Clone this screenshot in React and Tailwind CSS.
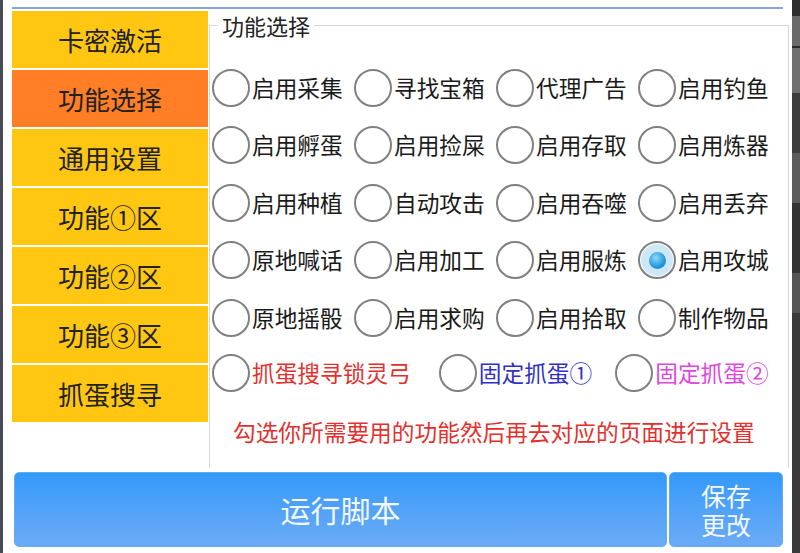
import React from "react";

const rows = [
  ["启用采集", "寻找宝箱", "代理广告", "启用钓鱼"],
  ["启用孵蛋", "启用捡屎", "启用存取", "启用炼器"],
  ["启用种植", "自动攻击", "启用吞噬", "启用丢弃"],
  ["原地喊话", "启用加工", "启用服炼", "启用攻城"],
  ["原地摇骰", "启用求购", "启用拾取", "制作物品"],
];
const tabs = ["卡密激活", "功能选择", "通用设置", "功能①区", "功能②区", "功能③区", "抓蛋搜寻"];

function Radio({ checked }) {
  return (
    <span className="w-[38px] h-[38px] shrink-0 rounded-full border-[2.5px] border-[#808080] bg-white flex items-center justify-center">
      {checked && (
        <span className="w-[32px] h-[32px] rounded-full bg-[#cde7f6] flex items-center justify-center">
          <span className="w-[17px] h-[17px] rounded-full bg-[radial-gradient(circle_at_40%_35%,#8fd8f8,#1a92d6_65%,#1478c0)]" />
        </span>
      )}
    </span>
  );
}

function Option({ label, checked, color = "text-[#1a1a1a]" }) {
  return (
    <div className="flex items-center gap-[2px]">
      <Radio checked={checked} />
      <span className={`text-[22.7px] leading-[30px] whitespace-nowrap ${color}`}>{label}</span>
    </div>
  );
}

export default function App() {
  return (
    <div className="w-[800px] h-[553px] flex bg-white overflow-hidden font-['Noto_Sans_CJK_SC','Noto_Sans',sans-serif]">
      <div className="w-[3px] shrink-0 bg-[#474b56]" />
      <div className="w-[789px] shrink-0 pt-[7px] flex flex-col">
        <div className="ml-[9px] w-[771px] h-[2px] bg-[#86a6d6]" />
        <div className="mt-[2px] flex h-[457px] pl-[9px]">
          <div className="w-[197px] shrink-0 flex flex-col gap-[2px]">
            {tabs.map((t, i) => (
              <div
                key={t}
                className={`w-[196px] h-[57px] flex items-center justify-center text-[26px] text-[#222] ${
                  i === 1 ? "bg-[#ff7e26]" : "bg-[#ffc712]"
                }`}
              >
                {t}
              </div>
            ))}
          </div>
          <fieldset className="w-[580px] min-w-0 border-l border-r border-t border-b-0 border-[#d8d8d8]">
            <legend className="ml-[8px] px-[4px] text-[22px] leading-[28px] text-[#222]">功能选择</legend>
            <div className="mt-[20px] pl-[2px] flex flex-col">
              {rows.map((r, ri) => (
                <div key={ri} className="h-[57.5px] flex items-center">
                  {r.map((label, ci) => (
                    <div key={label} className="w-[142px] shrink-0">
                      <Option label={label} checked={ri === 3 && ci === 3} />
                    </div>
                  ))}
                </div>
              ))}
              <div className="h-[52px] flex items-center">
                <Option label="抓蛋搜寻锁灵弓" color="text-[#e3302c]" />
                <div className="ml-[28px]">
                  <Option label="固定抓蛋①" color="text-[#3030c8]" />
                </div>
                <div className="ml-[23px]">
                  <Option label="固定抓蛋②" color="text-[#df45e0]" />
                </div>
              </div>
              <div className="mt-[18px] pl-[21px] text-[22.7px] leading-[30px] text-[#e3302c] whitespace-nowrap">
                勾选你所需要用的功能然后再去对应的页面进行设置
              </div>
            </div>
          </fieldset>
        </div>
        <div className="mt-[4px] flex pl-[11px] gap-[2px] h-[75px]">
          <button className="w-[653px] h-full rounded-[5px] border border-[#62adf2] bg-gradient-to-b from-[#3199f9] to-[#6babf6] text-[#f3f8ff] text-[30px] flex items-center justify-center">
            运行脚本
          </button>
          <button className="w-[114px] h-full rounded-[5px] border border-[#62adf2] bg-gradient-to-b from-[#3199f9] to-[#6babf6] text-[#f3f8ff] text-[25px] leading-[29px] flex items-center justify-center">
            <span className="block text-center">
              保存
              <br />
              更改
            </span>
          </button>
        </div>
      </div>
      <div className="w-[8px] shrink-0 flex flex-col bg-[#3a3a3a]">
        <div className="h-[16px] bg-[#2e2e2e]" />
        <div className="h-[30px] bg-[#6a6a6a]" />
        <div className="h-[2px] bg-[#2a2a2a]" />
        <div className="h-[45px] bg-[#707070]" />
        <div className="h-[60px] bg-[#3c3c3c]" />
        <div className="h-[50px] bg-[#5c5c5c]" />
        <div className="h-[70px] bg-[#333]" />
        <div className="h-[40px] bg-[#555]" />
        <div className="flex-1 bg-[#3a3a3a]" />
      </div>
    </div>
  );
}
